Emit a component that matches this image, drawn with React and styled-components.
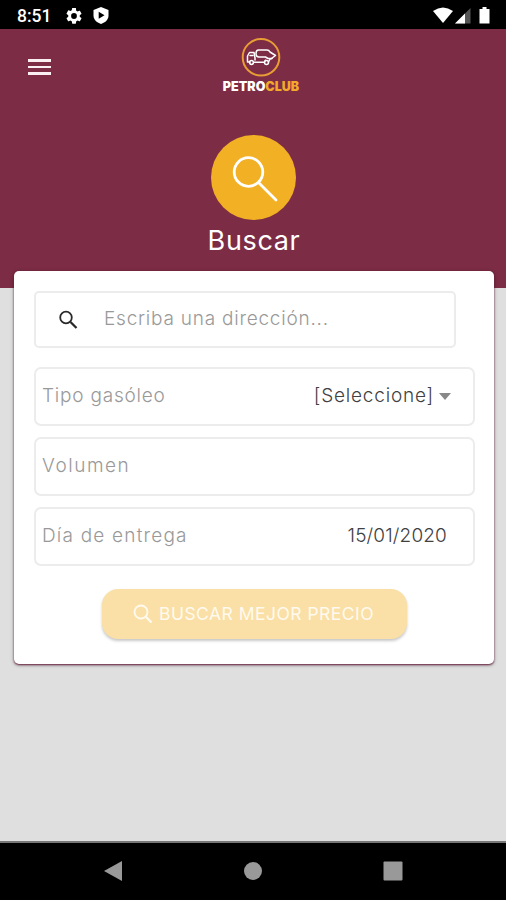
import React from "react";
import styled, { createGlobalStyle } from "styled-components";

const GlobalStyle = createGlobalStyle`
  * { box-sizing: border-box; }
  body { margin: 0; background: #000; font-family: Inter, "Open Sans", sans-serif; }
`;

const Screen = styled.div`
  display: flex;
  flex-direction: column;
  width: 506px;
  height: 900px;
  overflow: hidden;
  background: #dfdfdf;
`;

const StatusBar = styled.div`
  display: flex;
  flex: none;
  align-items: center;
  justify-content: space-between;
  height: 29px;
  padding: 2px 15px 0 17px;
  background: #000;
`;

const StatusGroup = styled.div`
  display: flex;
  align-items: center;
  gap: ${(p) => p.$gap}px;
`;

const Clock = styled.span`
  width: 49px;
  color: #fff;
  font: 500 17.5px/24px Roboto, sans-serif;
`;

const Header = styled.header`
  flex: none;
  height: 259px;
  background: #7c2c45;
`;

const TopBar = styled.div`
  display: grid;
  grid-template-columns: 1fr 80px 1fr;
  height: 106px;
  padding: 8px 13px 0 29px;
`;

const MenuButton = styled.button`
  display: flex;
  flex-direction: column;
  gap: 4px;
  width: 23px;
  height: 16px;
  margin: 22px 0 0 -1px;
  padding: 0;
  border: 0;
  background: none;
`;

const MenuLine = styled.span`
  width: 23px;
  height: 2.7px;
  background: #fbeff3;
`;

const Brand = styled.div`
  display: flex;
  flex-direction: column;
  align-items: center;
`;

const BrandName = styled.div`
  display: flex;
  color: #fff;
  font-size: 12.5px;
  font-weight: 900;
  line-height: 15px;
  margin-top: 2px;
  white-space: nowrap;
`;

const BrandAccent = styled.span`
  color: #f2a92b;
`;

const Hero = styled.div`
  display: flex;
  flex-direction: column;
  align-items: center;
`;

const HeroCircle = styled.div`
  display: flex;
  align-items: center;
  justify-content: center;
  width: 85px;
  height: 85px;
  padding: 3px 0 0 3px;
  border-radius: 50%;
  background: #f2b024;
`;

const Title = styled.h1`
  margin: 3px 0 0 2px;
  color: #fff;
  font-size: 27px;
  font-weight: 400;
  line-height: 36px;
  letter-spacing: 0.65px;
`;

const Main = styled.main`
  flex: 1;
  padding: 0 12px 0 14px;
`;

const Card = styled.section`
  display: flex;
  flex-direction: column;
  height: 393px;
  margin-top: -17px;
  padding: 20px 19px 0 20px;
  border-radius: 5px;
  background: #fff;
  box-shadow: 0 1px 2px #6b2440, 0 1px 4px rgba(0, 0, 0, 0.3);
`;

const Field = styled.div`
  display: flex;
  flex: none;
  align-items: center;
  justify-content: space-between;
  height: 59px;
  margin-bottom: 11px;
  padding: 0 ${(p) => p.$end ?? 22}px 1px 6px;
  border: 2px solid #ececec;
  border-radius: 7px;
  font-size: 19px;
  font-weight: 300;
  line-height: 24px;
  white-space: nowrap;
`;

const SearchField = styled(Field)`
  justify-content: flex-start;
  width: 422px;
  height: 57px;
  margin-bottom: 19px;
  padding-bottom: 2px;
  padding-left: 22px;
  border-radius: 5px;
`;

const SearchIconSlot = styled.span`
  display: flex;
  width: 46px;
  padding-top: 3px;
`;

const Label = styled.span`
  color: #999;
  letter-spacing: ${(p) => p.$track}px;
`;

const Value = styled.span`
  display: flex;
  align-items: center;
  color: #414141;
  letter-spacing: ${(p) => p.$track}px;
`;

const Caret = styled.svg`
  margin: 0 0 0 5px;
`;

const SubmitButton = styled.button`
  display: flex;
  flex: none;
  align-items: center;
  align-self: center;
  width: 305px;
  height: 50px;
  margin: 12px 0 0;
  padding: 0 0 0 31px;
  border: 0;
  border-radius: 16px;
  background: #fae0a6;
  box-shadow: 0 2px 3px rgba(0, 0, 0, 0.22);
  color: #fffaf0;
  font: 400 17.5px/24px Inter, sans-serif;
  letter-spacing: 0.47px;
  white-space: nowrap;
`;

const ButtonIcon = styled.svg`
  margin: -1px 6px 0 0;
`;

const NavBar = styled.nav`
  display: grid;
  flex: none;
  grid-template-columns: repeat(3, 140px);
  align-items: center;
  justify-content: center;
  justify-items: center;
  height: 59px;
  padding-bottom: 1px;
  border-top: 2px solid #777;
  background: #000;
`;

function GearIcon() {
  return (
    <svg width="16" height="16" viewBox="2 2 20 20" fill="#fff">
      <path d="M19.14 12.94c.04-.3.06-.61.06-.94s-.02-.64-.07-.94l2.03-1.58a.5.5 0 0 0 .12-.61l-1.92-3.32a.49.49 0 0 0-.59-.22l-2.39.96a7 7 0 0 0-1.62-.94l-.36-2.54A.48.48 0 0 0 13.92 2h-3.84a.48.48 0 0 0-.47.41l-.36 2.54a7 7 0 0 0-1.62.94l-2.39-.96a.48.48 0 0 0-.59.22L2.74 8.87a.48.48 0 0 0 .12.61l2.03 1.58a6 6 0 0 0 0 1.88l-2.03 1.58a.5.5 0 0 0-.12.61l1.92 3.32c.12.22.37.29.59.22l2.39-.96c.5.38 1.03.7 1.62.94l.36 2.54c.05.24.24.41.48.41h3.84c.24 0 .44-.17.47-.41l.36-2.54a7 7 0 0 0 1.62-.94l2.39.96c.22.08.47 0 .59-.22l1.92-3.32a.48.48 0 0 0-.12-.61zM12 15.6a3.6 3.6 0 1 1 0-7.2 3.6 3.6 0 0 1 0 7.2z" />
    </svg>
  );
}

function ShieldIcon() {
  return (
    <svg width="16" height="17" viewBox="0 0 16 17">
      <path d="M8 0l7.500 3v5.500c0 4-3 7-7.500 8.500C3.500 15.500.5 12.500.5 8.500V3z" fill="#fff" />
      <path d="M5.700 4.800v7L11.500 8.300z" fill="#000" />
    </svg>
  );
}

function SignalIcons() {
  return (
    <svg width="58" height="18" viewBox="0 0 58 18">
      <path d="M0 4Q10-3 20 4L10 16z" fill="#fff" />
      <path d="M22 16.500L37.500 1v15.500z" fill="#555" />
      <path d="M22 16.500L32 6.500v10z" fill="#fff" />
      <path d="M46.500 2h3V0h4v2h3v14.500h-10z" fill="#fff" />
    </svg>
  );
}

function TruckLogo() {
  return (
    <svg width="40" height="40" viewBox="0 0 40 40" fill="none">
      <circle cx="20" cy="20.300" r="18.300" stroke="#e89d35" strokeWidth="2" />
      <g stroke="#fff" strokeWidth="1.500" strokeLinejoin="round" strokeLinecap="round">
        <path d="M9 25H6.500v-6l2-3.500H13l1 5.500v2" />
        <path d="M9 18.500h3" />
        <path d="M17.500 13h8.500c2 0 2.500 1 3 2l5.500 3.500-4 3H27L24.500 20H18c-2 0-3-1.500-3-3.500s1-3.500 2.500-3.500z" />
        <path d="M13 25.200h10.500l1-2M27.500 25l1.500-3 2-.500" />
        <circle cx="10.500" cy="25.500" r="1.900" />
        <circle cx="25.500" cy="25.500" r="2" />
      </g>
    </svg>
  );
}

export default function App() {
  return (
    <Screen>
      <GlobalStyle />
      <StatusBar>
        <StatusGroup $gap={0}>
          <Clock>8:51</Clock>
          <StatusGroup $gap={11}>
            <GearIcon />
            <ShieldIcon />
          </StatusGroup>
        </StatusGroup>
        <SignalIcons />
      </StatusBar>
      <Header>
        <TopBar>
          <MenuButton aria-label="Menú">
            <MenuLine />
            <MenuLine />
            <MenuLine />
          </MenuButton>
          <Brand>
            <TruckLogo />
            <BrandName>
              PETRO<BrandAccent>CLUB</BrandAccent>
            </BrandName>
          </Brand>
        </TopBar>
        <Hero>
          <HeroCircle>
            <svg width="46" height="46" viewBox="0 0 46 46" fill="none" stroke="#fff" strokeWidth="2.800" strokeLinecap="round">
              <circle cx="16.500" cy="16" r="14.300" />
              <path d="M27 27L44 44" />
            </svg>
          </HeroCircle>
          <Title>Buscar</Title>
        </Hero>
      </Header>
      <Main>
        <Card>
          <SearchField>
            <SearchIconSlot>
              <svg width="20" height="20" viewBox="0 0 20 20" fill="none" stroke="#292929">
                <circle cx="8" cy="7.500" r="5.800" strokeWidth="1.800" />
                <path d="M12.500 12L18.500 18" strokeWidth="2.300" />
              </svg>
            </SearchIconSlot>
            <Label $track={0.77}>Escriba una dirección...</Label>
          </SearchField>
          <Field>
            <Label $track={0.78}>Tipo gasóleo</Label>
            <Value $track={0.8}>
              [Seleccione]
              <Caret width="12" height="7" viewBox="0 0 12 7">
                <path d="M0 0h12L6 7z" fill="#888" />
              </Caret>
            </Value>
          </Field>
          <Field>
            <Label $track={1.55}>Volumen</Label>
          </Field>
          <Field $end={26}>
            <Label $track={1.2}>Día de entrega</Label>
            <Value $track={0.15}>15/01/2020</Value>
          </Field>
          <SubmitButton>
            <ButtonIcon width="20" height="20" viewBox="0 0 20 20" fill="none" stroke="#fffaf0">
              <circle cx="8" cy="8" r="6.500" strokeWidth="1.800" />
              <path d="M12.500 12.500L18.500 18.500" strokeWidth="2.400" />
            </ButtonIcon>
            BUSCAR MEJOR PRECIO
          </SubmitButton>
        </Card>
      </Main>
      <NavBar>
        <svg width="20" height="22" viewBox="0 0 20 22">
          <path d="M1 11L19 1v20z" fill="#999" />
        </svg>
        <svg width="20" height="20" viewBox="0 0 20 20">
          <circle cx="10" cy="10" r="9" fill="#999" />
        </svg>
        <svg width="20" height="20" viewBox="0 0 20 20">
          <rect x=".5" y=".5" width="19" height="19" rx="1" fill="#999" />
        </svg>
      </NavBar>
    </Screen>
  );
}
